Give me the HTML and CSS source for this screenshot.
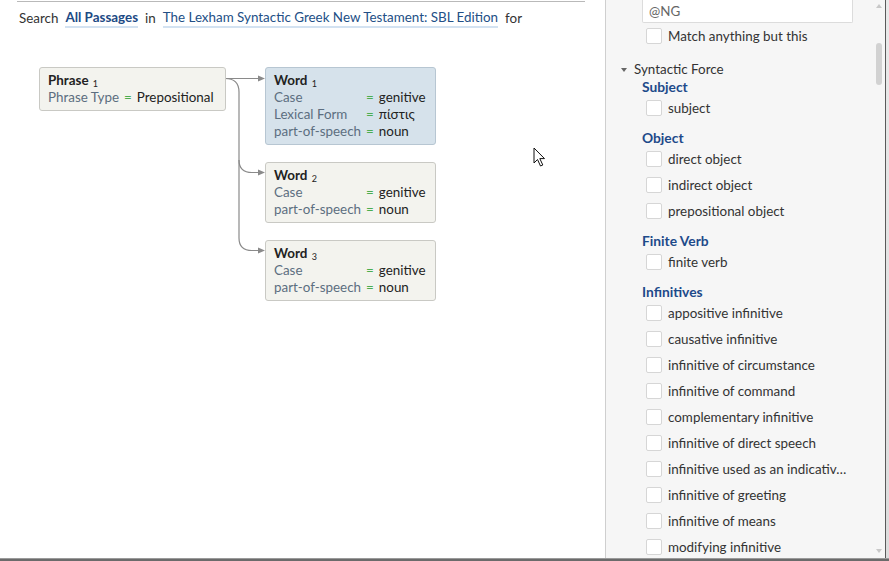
FILE: index.html
```html
<!DOCTYPE html>
<html>
<head>
<meta charset="utf-8">
<link rel="stylesheet" href="styles.css">
</head>
<body>
<div class="app">
  <main class="left">
    <div class="topline"></div>
    <div class="search">
      <span>Search</span>
      <a class="link strong">All Passages</a>
      <span>in</span>
      <a class="link">The Lexham Syntactic Greek New Testament: SBL Edition</a>
      <span>for</span>
    </div>
    <div class="diagram">
      <svg class="wires" width="300" height="260" viewBox="0 0 300 260">
        <g fill="none" stroke="#8a8a8a" stroke-width="1.2">
          <path d="M225 78.5 H258"/>
          <path d="M225 78.5 Q239 78.5 239 92 V160 Q239 172.5 252 172.5 H258"/>
          <path d="M239 160 V238 Q239 250.5 252 250.5 H258"/>
        </g>
        <g fill="#8a8a8a">
          <path d="M258 75.5 L265 78.5 L258 81.5Z"/>
          <path d="M258 169.5 L265 172.5 L258 175.5Z"/>
          <path d="M258 247.5 L265 250.5 L258 253.5Z"/>
        </g>
      </svg>
      <div class="node phrase">
        <div class="title">Phrase <sub>1</sub></div>
        <div class="attrs">
          <span class="k">Phrase Type</span><span class="eq">=</span><span class="v">Prepositional</span>
        </div>
      </div>
      <div class="node word w1 sel">
        <div class="title">Word <sub>1</sub></div>
        <div class="attrs">
          <span class="k">Case</span><span class="eq">=</span><span class="v">genitive</span>
          <span class="k">Lexical Form</span><span class="eq">=</span><span class="v">πίστις</span>
          <span class="k">part-of-speech</span><span class="eq">=</span><span class="v">noun</span>
        </div>
      </div>
      <div class="node word w2">
        <div class="title">Word <sub>2</sub></div>
        <div class="attrs">
          <span class="k">Case</span><span class="eq">=</span><span class="v">genitive</span>
          <span class="k">part-of-speech</span><span class="eq">=</span><span class="v">noun</span>
        </div>
      </div>
      <div class="node word w3">
        <div class="title">Word <sub>3</sub></div>
        <div class="attrs">
          <span class="k">Case</span><span class="eq">=</span><span class="v">genitive</span>
          <span class="k">part-of-speech</span><span class="eq">=</span><span class="v">noun</span>
        </div>
      </div>
      <svg class="cursor" width="14" height="20" viewBox="0 0 14 20">
        <path d="M1 1 V16 L4.5 12.5 L7.5 19 L9.8 18 L6.8 11.6 L11.5 11.6 Z" fill="#fff" stroke="#111" stroke-width="1" stroke-linejoin="round"/>
      </svg>
    </div>
  </main>
  <aside class="panel">
    <div class="panel-content">
      <div class="input">@NG</div>
      <label class="row"><span class="box"></span>Match anything but this</label>
      <div class="section"><span class="tri"></span>Syntactic Force</div>
      <div class="group first">Subject</div>
      <label class="row"><span class="box"></span>subject</label>
      <div class="group">Object</div>
      <label class="row"><span class="box"></span>direct object</label>
      <label class="row"><span class="box"></span>indirect object</label>
      <label class="row"><span class="box"></span>prepositional object</label>
      <div class="group">Finite Verb</div>
      <label class="row"><span class="box"></span>finite verb</label>
      <div class="group">Infinitives</div>
      <label class="row"><span class="box"></span>appositive infinitive</label>
      <label class="row"><span class="box"></span>causative infinitive</label>
      <label class="row"><span class="box"></span>infinitive of circumstance</label>
      <label class="row"><span class="box"></span>infinitive of command</label>
      <label class="row"><span class="box"></span>complementary infinitive</label>
      <label class="row"><span class="box"></span>infinitive of direct speech</label>
      <label class="row"><span class="box"></span>infinitive used as an indicativ…</label>
      <label class="row"><span class="box"></span>infinitive of greeting</label>
      <label class="row"><span class="box"></span>infinitive of means</label>
      <label class="row"><span class="box"></span>modifying infinitive</label>
    </div>
    <div class="scrollbar">
      <span class="arrow up"></span>
      <span class="thumb"></span>
      <span class="arrow down"></span>
    </div>
  </aside>
  <div class="edge"></div>
</div>
<div class="bottomline"></div>
</body>
</html>
```

FILE: styles.css
```css
html, body {
  margin: 0;
  padding: 0;
  background: #fff;
}
body {
  width: 889px;
  height: 561px;
  overflow: hidden;
  font-family: "Lato", "Noto Sans", sans-serif;
  font-size: 13.4px;
  color: #333;
}
.app {
  display: flex;
  height: 558px;
}
.left {
  width: 605px;
  flex: none;
  position: relative;
}
.topline {
  margin: 1px 20px 0 17px;
  height: 1px;
  background: #b9b9b9;
}
.search {
  display: flex;
  gap: 7px;
  padding: 7px 0 0 19px;
  line-height: 18px;
  color: #333;
}
.link {
  color: #234f86;
  border-bottom: 2px solid #d3e2f1;
  line-height: 17px;
}
.link.strong {
  font-weight: bold;
  color: #1d4a85;
}
.diagram {
  position: relative;
  height: 500px;
}
.wires {
  position: absolute;
  left: 0;
  top: -28px;
}
.node {
  position: absolute;
  box-sizing: border-box;
  border: 1px solid #c9c9c4;
  border-radius: 3px;
  background: #f3f3ee;
  padding: 4px 8px 4px 8px;
  line-height: 17px;
  white-space: nowrap;
}
.node.sel {
  background: #d6e2eb;
  border-color: #b7c6d2;
}
.phrase { left: 39px; top: 39px; width: 187px; }
.word { left: 265px; width: 171px; }
.w1 { top: 39px; }
.w2 { top: 134px; }
.w3 { top: 212px; }
.title {
  font-weight: bold;
  color: #222;
  height: 17px;
  line-height: 17px;
}
.title sub {
  font-weight: normal;
  font-size: 9px;
  line-height: 0;
  vertical-align: -2px;
  margin-left: 1px;
}
.attrs {
  display: grid;
  grid-template-columns: max-content max-content max-content;
  column-gap: 5px;
  justify-content: start;
}
.k { color: #5c6e80; }
.eq { color: #4cae50; }
.v { color: #222; }
.cursor {
  position: absolute;
  left: 533px;
  top: 119px;
}
.panel {
  width: 279px;
  flex: none;
  background: #f6f6f6;
  border-left: 1px solid #cfcfcf;
  position: relative;
  overflow: hidden;
}
.input {
  margin-left: 36px;
  width: 211px;
  height: 23px;
  box-sizing: border-box;
  background: #fff;
  border: 1px solid #dcdcdc;
  border-top: none;
  border-radius: 0 0 2px 2px;
  padding: 0 0 0 6px;
  line-height: 22px;
  color: #666;
}
.row {
  display: flex;
  align-items: center;
  gap: 6px;
  height: 26px;
  padding-left: 40px;
  color: #333;
  white-space: nowrap;
}
.box {
  width: 14px;
  height: 14px;
  flex: none;
  background: #fff;
  border: 1px solid #d6d6d6;
  border-radius: 2px;
}
.section {
  display: flex;
  align-items: center;
  margin-top: 12px;
  padding-left: 15px;
  line-height: 17px;
  color: #333;
}
.tri {
  width: 0;
  height: 0;
  border-left: 3px solid transparent;
  border-right: 3px solid transparent;
  border-top: 4px solid #666;
  margin-right: 7px;
}
.group {
  margin-top: 8px;
  padding-left: 36px;
  height: 17px;
  line-height: 17px;
  font-weight: bold;
  font-size: 13.8px;
  color: #1d4a8a;
}
.group.first { margin-top: 0; }
.scrollbar {
  position: absolute;
  top: 0;
  right: 0;
  width: 12px;
  height: 100%;
}
.thumb {
  position: absolute;
  left: 3px;
  top: 43px;
  width: 6px;
  height: 42px;
  border-radius: 3px;
  background: #d2d2d2;
}
.arrow {
  position: absolute;
  left: 3px;
  width: 0;
  height: 0;
  border-left: 3px solid transparent;
  border-right: 3px solid transparent;
}
.arrow.up { top: 4px; border-bottom: 4px solid #c8c8c8; }
.arrow.down { bottom: 5px; border-top: 4px solid #c8c8c8; }
.edge {
  flex: 1;
  border-left: 1px solid #5a5a5a;
  background: linear-gradient(#e9e9e9, #dcdcdc);
}
.bottomline {
  height: 3px;
  background: #6b6b6b;
  border-top: 1px solid #9a9a9a;
  box-sizing: border-box;
}
```
